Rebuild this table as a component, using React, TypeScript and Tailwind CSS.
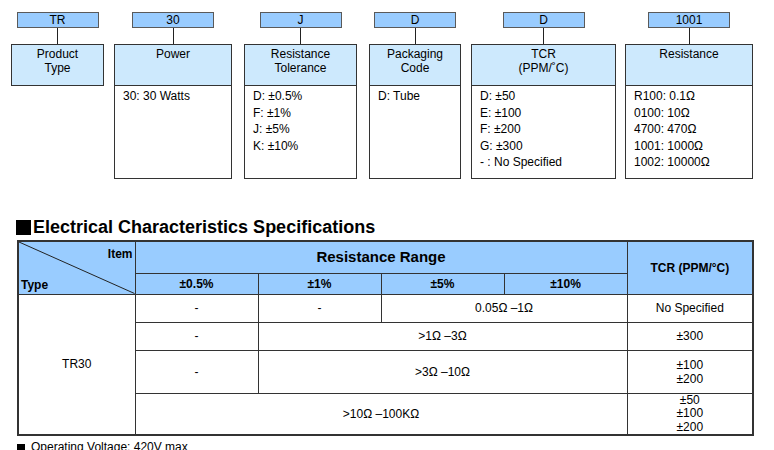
const cols = [
  { code: "TR", title: ["Product", "Type"], lines: null as string[] | null, w: "w-[93px]", ml: "ml-[11px]" },
  { code: "30", title: ["Power"], lines: ["30: 30 Watts"], w: "w-[118px]", ml: "ml-[10px]" },
  { code: "J", title: ["Resistance", "Tolerance"], lines: ["D: ±0.5%", "F: ±1%", "J: ±5%", "K: ±10%"], w: "w-[113px]", ml: "ml-[12px]" },
  { code: "D", title: ["Packaging", "Code"], lines: ["D: Tube"], w: "w-[92px]", ml: "ml-[12px]" },
  { code: "D", title: ["TCR", "(PPM/˚C)"], lines: ["D: ±50", "E: ±100", "F: ±200", "G: ±300", "- : No Specified"], w: "w-[145px]", ml: "ml-[10px]" },
  { code: "1001", title: ["Resistance"], lines: ["R100: 0.1Ω", "0100: 10Ω", "4700: 470Ω", "1001: 1000Ω", "1002: 10000Ω"], w: "w-[128px]", ml: "ml-[9px]" },
];

function CodeColumn({ c }: { c: (typeof cols)[number] }) {
  return (
    <div className={`${c.w} ${c.ml} flex flex-col items-center shrink-0`}>
      <div className="w-[82px] h-[16px] bg-[#99ccff] border border-[#5a5a5a] flex items-center justify-center text-[12px] leading-none text-black">
        {c.code}
      </div>
      <div className="w-px h-[16px] bg-[#222]" />
      <div className="w-full border border-[#333] bg-white">
        <div className="h-[40px] bg-[#cde9fd] flex flex-col items-center pt-[2px] text-[12px] leading-[14px] text-black">
          {c.title.map((t) => (
            <div key={t}>{t}</div>
          ))}
        </div>
        {c.lines && (
          <div className="h-[93px] border-t border-[#333] pl-[8px] pt-[2px] text-[12px] leading-[16.5px] text-black">
            {c.lines.map((l) => (
              <div key={l}>{l}</div>
            ))}
          </div>
        )}
      </div>
    </div>
  );
}

const td = "border border-[#333] text-center align-middle text-[12px] text-black";
const th = "border border-[#333] bg-[#99ccff] text-center align-middle font-bold text-black";

export default function App() {
  return (
    <div className="w-[774px] h-[450px] overflow-hidden bg-white font-['Liberation_Sans',Arial,sans-serif] relative">
      <div className="flex items-start pt-[12px]">
        {cols.map((c, i) => (
          <CodeColumn key={i} c={c} />
        ))}
      </div>

      <div className="mt-[39px] ml-[16px] flex items-center h-[18px]">
        <div className="w-[15px] h-[15px] bg-black" />
        <div className="ml-[2px] text-[18px] font-bold leading-none text-black">
          Electrical Characteristics Specifications
        </div>
      </div>

      <table className="mt-[4px] ml-[17px] border-collapse border-2 border-[#333] table-fixed w-[735px]">
        <colgroup>
          <col className="w-[117px]" />
          <col className="w-[123px]" />
          <col className="w-[123px]" />
          <col className="w-[123px]" />
          <col className="w-[123px]" />
          <col className="w-[126px]" />
        </colgroup>
        <tbody>
          <tr className="h-[32px]">
            <th rowSpan={2} className={`${th} relative p-0`}>
              <svg className="absolute inset-0 w-full h-full" viewBox="0 0 100 100" preserveAspectRatio="none">
                <line x1="0" y1="0" x2="100" y2="100" stroke="#222" strokeWidth="1" vectorEffect="non-scaling-stroke" />
              </svg>
              <span className="absolute right-[2px] top-[3px] text-[12px]">Item</span>
              <span className="absolute left-[2px] bottom-[0px] text-[12px]">Type</span>
            </th>
            <th colSpan={4} className={`${th} text-[15px]`}>Resistance Range</th>
            <th rowSpan={2} className={`${th} text-[12px]`}>TCR (PPM/°C)</th>
          </tr>
          <tr className="h-[21px]">
            <th className={`${th} text-[12px]`}>±0.5%</th>
            <th className={`${th} text-[12px]`}>±1%</th>
            <th className={`${th} text-[12px]`}>±5%</th>
            <th className={`${th} text-[12px]`}>±10%</th>
          </tr>
          <tr className="h-[28px]">
            <td rowSpan={4} className={td}>TR30</td>
            <td className={td}>-</td>
            <td className={td}>-</td>
            <td colSpan={2} className={td}>0.05Ω –1Ω</td>
            <td className={td}>No Specified</td>
          </tr>
          <tr className="h-[28px]">
            <td className={td}>-</td>
            <td colSpan={3} className={td}>&gt;1Ω –3Ω</td>
            <td className={td}>±300</td>
          </tr>
          <tr className="h-[43px]">
            <td className={td}>-</td>
            <td colSpan={3} className={td}>&gt;3Ω –10Ω</td>
            <td className={`${td} leading-[14px]`}>±100<br />±200</td>
          </tr>
          <tr className="h-[42px]">
            <td colSpan={4} className={td}>&gt;10Ω –100KΩ</td>
            <td className={`${td} leading-[13.5px]`}>±50<br />±100<br />±200</td>
          </tr>
        </tbody>
      </table>

      <div className="ml-[17px] mt-[5px] flex items-center text-[12px] leading-none text-black">
        <div className="w-[8px] h-[7px] bg-black mr-[6px]" />
        Operating Voltage: 420V max
      </div>
    </div>
  );
}
